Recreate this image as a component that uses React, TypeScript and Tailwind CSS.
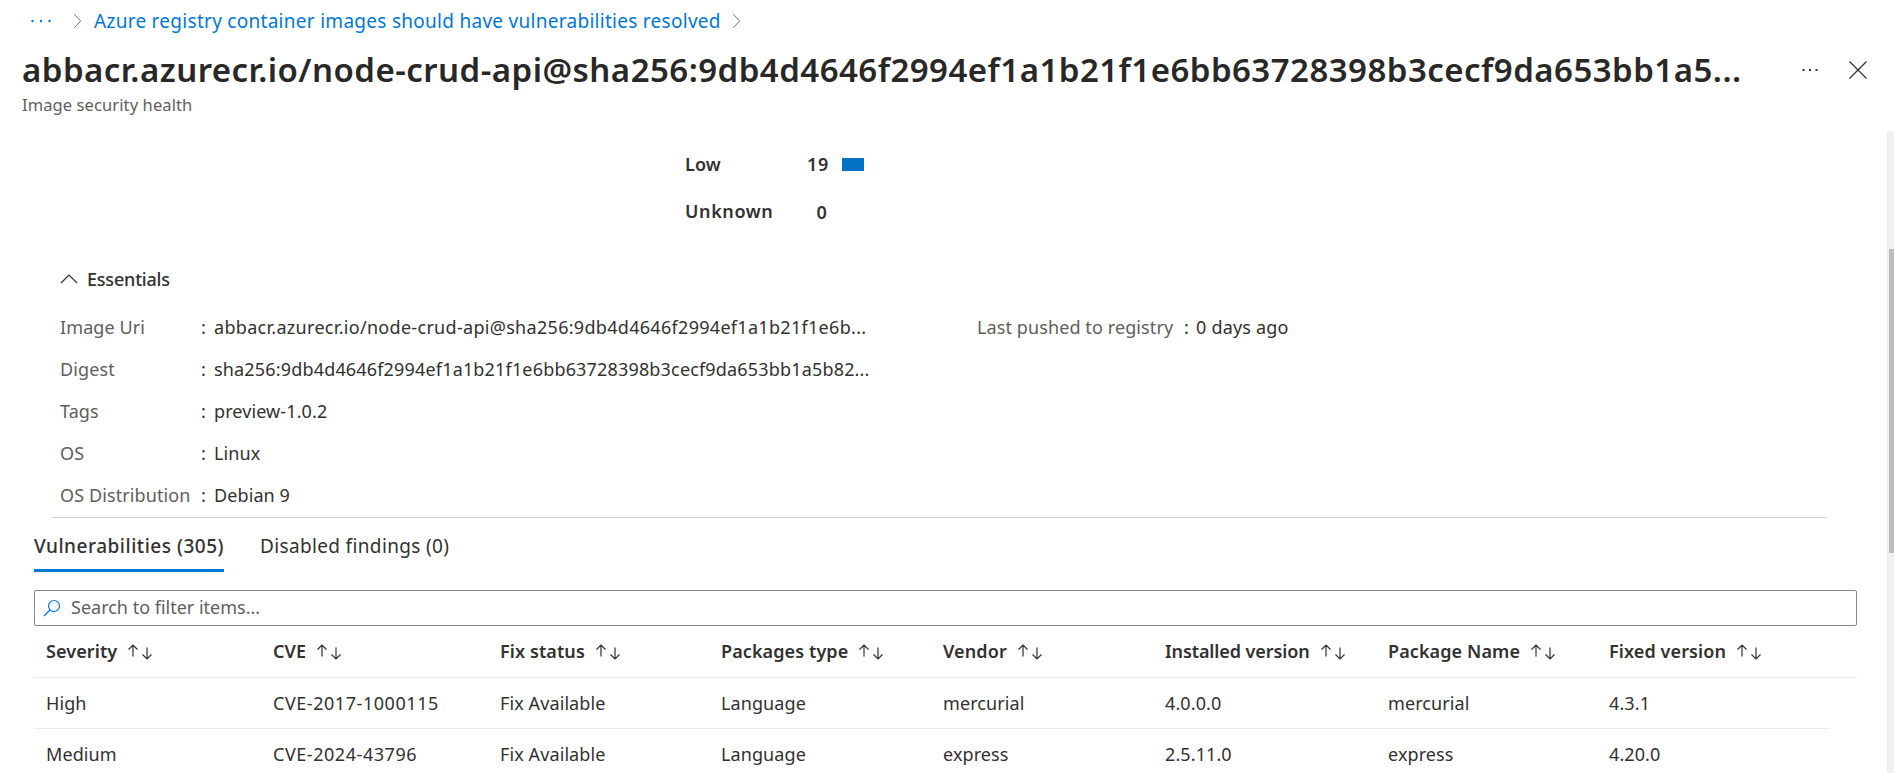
import React from 'react';

const FONT = "font-['Noto_Sans',sans-serif]";

function Chevron({ className }: { className?: string }) {
    return (
        <svg viewBox="0 0 10 18" className={className} fill="none" stroke="currentColor" strokeWidth="1">
            <path d="M1.5 1.5 L8.5 9 L1.5 16.5" />
        </svg>
    );
}

function SortArrows() {
    return (
        <svg viewBox="0 0 24 16" className="w-[24px] h-[16px] shrink-0" fill="none" stroke="#323130" strokeWidth="1.2">
            <path d="M5 12.5 V1 M0.5 5.5 L5 1 L9.5 5.5" />
            <path d="M19 3.5 V15 M14.5 10.5 L19 15 L23.5 10.5" />
        </svg>
    );
}

const essentials = [
    { label: 'Image Uri', value: 'abbacr.azurecr.io/node-crud-api@sha256:9db4d4646f2994ef1a1b21f1e6b...', track: 'tracking-[0.3px]' },
    { label: 'Digest', value: 'sha256:9db4d4646f2994ef1a1b21f1e6bb63728398b3cecf9da653bb1a5b82...', track: 'tracking-[0.17px]' },
    { label: 'Tags', value: 'preview-1.0.2', track: 'tracking-[0.1px]' },
    { label: 'OS', value: 'Linux', track: 'tracking-[0.1px]' },
    { label: 'OS Distribution', value: 'Debian 9', track: 'tracking-[0.1px]' },
];

const columns = ['Severity', 'CVE', 'Fix status', 'Packages type', 'Vendor', 'Installed version', 'Package Name', 'Fixed version'];

const rows = [
    ['High', 'CVE-2017-1000115', 'Fix Available', 'Language', 'mercurial', '4.0.0.0', 'mercurial', '4.3.1'],
    ['Medium', 'CVE-2024-43796', 'Fix Available', 'Language', 'express', '2.5.11.0', 'express', '4.20.0'],
];

const gridCols = 'grid grid-cols-[227px_227px_221px_222px_222px_223px_221px_1fr]';

export default function App() {
    return (
        <div className={`${FONT} relative h-[773px] w-full overflow-hidden bg-white text-[#323130] text-[18px] tracking-[0.1px]`}>
            {/* --- BREADCRUMB --- */}
            <div className="flex h-[42px] items-center pl-[31px]">
                <svg viewBox="0 0 20 4" className="w-[20px] h-[4px] text-[#0078d4]" fill="currentColor">
                    <circle cx="1.5" cy="2" r="1.2" />
                    <circle cx="10" cy="2" r="1.2" />
                    <circle cx="18.5" cy="2" r="1.2" />
                </svg>
                <Chevron className="ml-[22px] w-[9px] h-[16px] text-[#605e5c]" />
                <a className="ml-[12px] text-[#0078d4] text-[19px] tracking-[0.28px]">Azure registry container images should have vulnerabilities resolved</a>
                <Chevron className="ml-[11px] w-[9px] h-[16px] text-[#605e5c]" />
            </div>

            {/* --- TITLE --- */}
            <div className="mt-[8px] flex h-[40px] items-center pl-[22px]">
                <h1 className="w-[1740px] whitespace-nowrap text-[33px] font-semibold tracking-[0.47px] text-[#292827]">
                    abbacr.azurecr.io/node-crud-api@sha256:9db4d4646f2994ef1a1b21f1e6bb63728398b3cecf9da653bb1a5...
                </h1>
                <svg viewBox="0 0 16 4" className="ml-[40px] w-[16px] h-[4px] text-[#323130]" fill="currentColor">
                    <rect x="0.5" y="1" width="2" height="2" />
                    <rect x="7" y="1" width="2" height="2" />
                    <rect x="13.5" y="1" width="2" height="2" />
                </svg>
                <svg viewBox="0 0 18 18" className="ml-[31px] w-[18px] h-[18px]" fill="none" stroke="#323130" strokeWidth="1.2">
                    <path d="M0.5 0.5 L17.5 17.5 M17.5 0.5 L0.5 17.5" />
                </svg>
            </div>
            <div className="mt-[5px] flex h-[20px] items-center pl-[22px] text-[16.5px] text-[#605e5c]">Image security health</div>

            {/* --- SEVERITY COUNTS --- */}
            <div className="mt-[26px] ml-[685px] w-[200px] font-semibold">
                <div className="flex h-[47px] items-center">
                    <span className="w-[122px]">Low</span>
                    <span className="w-[20px] whitespace-nowrap text-right tracking-[0.8px]">19</span>
                    <span className="ml-[15px] h-[13px] w-[22px] bg-[#0072c6]" />
                </div>
                <div className="flex h-[47px] items-center">
                    <span className="w-[122px] tracking-[0.6px]">Unknown</span>
                    <span className="w-[20px] pt-[2px] text-right">0</span>
                </div>
            </div>

            {/* --- ESSENTIALS --- */}
            <div className="mt-[22px] ml-[60px] flex h-[44px] items-center gap-[9px] font-medium tracking-[-0.2px]">
                <svg viewBox="0 0 18 10" className="w-[18px] h-[10px]" fill="none" stroke="#323130" strokeWidth="1.2">
                    <path d="M1 9 L9 1 L17 9" />
                </svg>
                Essentials
            </div>
            <div className="ml-[52px] mr-[67px] mt-[5px] border-b border-[#d2d0ce] pl-[8px] pb-[1px]">
                <div className="flex">
                    <div className="w-[917px]">
                        {essentials.map((item) => (
                            <div key={item.label} className="flex h-[42px] items-center">
                                <span className="w-[141px] text-[#605e5c]">{item.label}</span>
                                <span className="w-[13px]">:</span>
                                <span className={`whitespace-nowrap ${item.track}`}>{item.value}</span>
                            </div>
                        ))}
                    </div>
                    <div className="flex h-[42px] items-center">
                        <span className="w-[207px] text-[#605e5c]">Last pushed to registry</span>
                        <span className="w-[12px]">:</span>
                        <span className="tracking-[0.2px]">0 days ago</span>
                    </div>
                </div>
            </div>

            {/* --- TABS --- */}
            <div className="ml-[34px] mt-[12px] flex h-[42px] gap-[36px] text-[19px]">
                <div className="flex h-full w-[190px] items-start justify-center whitespace-nowrap border-b-[3px] border-[#0078d4] pt-[2px] font-medium tracking-[0.53px]">Vulnerabilities (305)</div>
                <div className="whitespace-nowrap pt-[2px] tracking-[0.35px] text-[#323130]">Disabled findings (0)</div>
            </div>

            {/* --- SEARCH --- */}
            <div className="ml-[34px] mt-[18px] flex h-[36px] w-[1823px] items-center rounded-[2px] border border-[#8a8886] pl-[8px]">
                <svg viewBox="0 0 18 18" className="w-[18px] h-[18px]" fill="none" stroke="#0078d4" strokeWidth="1.2">
                    <circle cx="11" cy="7" r="5.5" />
                    <path d="M7 11 L1 17" />
                </svg>
                <span className="ml-[10px] mb-[2px] tracking-[0px] text-[#605e5c]">Search to filter items...</span>
            </div>

            {/* --- TABLE --- */}
            <div className="ml-[34px] w-[1823px]">
                <div className={`${gridCols} h-[52px] items-center border-b border-[#edebe9] pl-[12px] font-semibold`}>
                    {columns.map((col) => (
                        <div key={col} className="flex items-center gap-[11px]">
                            <span className={`whitespace-nowrap ${col === 'Installed version' ? 'tracking-[-0.1px]' : ''}`}>{col}</span>
                            <SortArrows />
                        </div>
                    ))}
                </div>
                {rows.map((row) => (
                    <div key={row[0]} className={`${gridCols} mr-[27px] h-[51px] items-center border-b border-[#edebe9] pl-[12px]`}>
                        {row.map((cell, i) => (
                            <div key={i} className={`whitespace-nowrap ${i === 1 ? 'tracking-[0.55px]' : ''}`}>{cell}</div>
                        ))}
                    </div>
                ))}
            </div>

            {/* scrollbar over the blade */}
            <div className="absolute right-0 top-[131px] bottom-0 w-[7px] bg-[#f0f0f0]">
                <div className="absolute right-0 top-[118px] h-[304px] w-[5px] bg-[#bdbdbd]" />
            </div>
        </div>
    );
}
